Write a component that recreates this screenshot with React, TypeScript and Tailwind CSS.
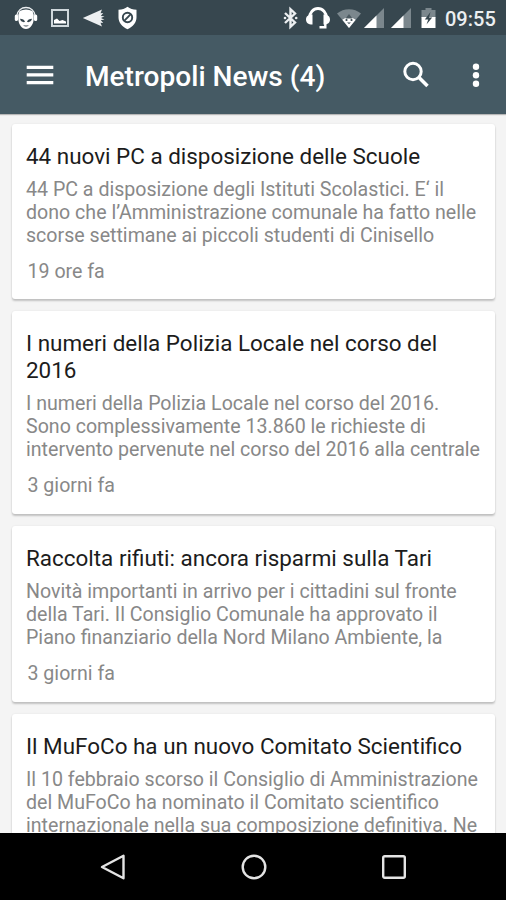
type NewsItem = {
  title: string[];
  body: string[];
  age?: string;
};

const news: NewsItem[] = [
  {
    title: ['44 nuovi PC a disposizione delle Scuole'],
    body: [
      '44 PC a disposizione degli Istituti Scolastici. E‘ il',
      'dono che l’Amministrazione comunale ha fatto nelle',
      'scorse settimane ai piccoli studenti di Cinisello',
    ],
    age: '19 ore fa',
  },
  {
    title: ['I numeri della Polizia Locale nel corso del', '2016'],
    body: [
      'I numeri della Polizia Locale nel corso del 2016.',
      'Sono complessivamente 13.860 le richieste di',
      'intervento pervenute nel corso del 2016 alla centrale',
    ],
    age: '3 giorni fa',
  },
  {
    title: ['Raccolta rifiuti: ancora risparmi sulla Tari'],
    body: [
      'Novità importanti in arrivo per i cittadini sul fronte',
      'della Tari. Il Consiglio Comunale ha approvato il',
      'Piano finanziario della Nord Milano Ambiente, la',
    ],
    age: '3 giorni fa',
  },
  {
    title: ['Il MuFoCo ha un nuovo Comitato Scientifico'],
    body: [
      'Il 10 febbraio scorso il Consiglio di Amministrazione',
      'del MuFoCo ha nominato il Comitato scientifico',
      'internazionale nella sua composizione definitiva. Ne',
    ],
  },
];

export default function App() {
  return (
    <div className="flex h-[900px] w-[506px] flex-col overflow-hidden bg-[#f4f4f4] font-['Roboto',sans-serif]">
      <StatusBar />
      <Toolbar />
      <main className="flex min-h-0 flex-1 flex-col gap-[12px] overflow-hidden pt-[9.5px] pr-[11px] pl-[12px]">
        {news.map((item) => (
          <NewsCard key={item.title[0]} item={item} />
        ))}
      </main>
      <NavigationBar />
    </div>
  );
}

function StatusBar() {
  return (
    <header className="flex h-[35px] shrink-0 items-center justify-between bg-[#37474f] pt-[1px] pr-[10px] pl-[14px] text-white">
      <div className="flex items-center gap-[12px]">
        <CatIcon />
        <PictureIcon />
        <ArrowIcon />
        <ShieldIcon />
      </div>
      <div className="flex items-center">
        <BluetoothIcon />
        <HeadsetIcon />
        <WifiIcon />
        <SignalIcon />
        <SignalIcon />
        <BatteryIcon />
        <span className="w-[51px] pt-[1px] text-[20px] leading-[24px] font-medium whitespace-nowrap text-[#eceff1]">
          09:55
        </span>
      </div>
    </header>
  );
}

function Toolbar() {
  return (
    <div className="z-10 flex h-[79px] shrink-0 items-center bg-[#455a64] pl-[26px] text-white shadow-[0_1px_1px_rgba(0,0,0,0.25)]">
      <svg width="28" height="20" viewBox="0 0 28 20" fill="currentColor">
        <path d="M.7 .7h26.600v3.300H.7zM.7 8.300h26.600v3.300H.7zM.7 15.900h26.600v3.300H.7z" />
      </svg>
      <h1 className="ml-[31px] flex-1 pt-[4px] text-[28.1px] leading-[32px] font-medium whitespace-nowrap">
        Metropoli News (4)
      </h1>
      <svg
        className="mr-[41px]"
        width="28"
        height="28"
        viewBox="0 0 28 28"
        fill="none"
        stroke="currentColor"
        strokeWidth="3"
      >
        <circle cx="11" cy="10.500" r="8.200" />
        <path d="M16.500 16l9 9" strokeWidth="3.600" />
      </svg>
      <svg
        className="mr-[25px]"
        width="10"
        height="26"
        viewBox="0 0 10 26"
        fill="currentColor"
      >
        <circle cx="5" cy="4.800" r="3.200" />
        <circle cx="5" cy="13.300" r="3.200" />
        <circle cx="5" cy="21.800" r="3.200" />
      </svg>
    </div>
  );
}

function NewsCard({ item }: { item: NewsItem }) {
  return (
    <article className="shrink-0 rounded-[3px] bg-white px-[14px] pt-[19px] pb-[15.5px] whitespace-nowrap shadow-[0_2px_2px_rgba(0,0,0,0.2),0_0_2px_rgba(0,0,0,0.08)]">
      <h2 className="text-[22.45px] leading-[26.75px] text-[#1c1c1c]">
        {item.title.map((line) => (
          <span key={line} className="block">
            {line}
          </span>
        ))}
      </h2>
      <p className="mt-[8.5px] text-[19.6px] leading-[23px] text-[#888]">
        {item.body.map((line) => (
          <span key={line} className="block">
            {line}
          </span>
        ))}
      </p>
      {item.age && (
        <div className="mt-[13px] pl-[1.5px] text-[19.6px] leading-[24px] text-[#888]">
          {item.age}
        </div>
      )}
    </article>
  );
}

function NavigationBar() {
  return (
    <nav className="flex h-[67px] shrink-0 items-center justify-center gap-[112.5px] bg-black pl-[1px] text-[#e4e4e4]">
      <svg
        width="28"
        height="28"
        viewBox="0 0 28 28"
        fill="none"
        stroke="currentColor"
        strokeWidth="2.400"
        strokeLinejoin="round"
      >
        <path d="M24.500 2.700v22.600L3 14z" />
      </svg>
      <svg
        width="28"
        height="28"
        viewBox="0 0 28 28"
        fill="none"
        stroke="currentColor"
        strokeWidth="2.400"
      >
        <circle cx="14" cy="14" r="11.300" />
      </svg>
      <svg
        width="28"
        height="28"
        viewBox="0 0 28 28"
        fill="none"
        stroke="currentColor"
        strokeWidth="2.400"
      >
        <rect x="3.200" y="3.200" width="21.600" height="21.600" rx="1.500" />
      </svg>
    </nav>
  );
}

function CatIcon() {
  return (
    <svg width="24" height="24" viewBox="0 0 24 24">
      <path
        d="M2.800 10C3.500 4.500 7.500 1.600 12 1.600S20.500 4.500 21.200 10"
        fill="none"
        stroke="#eceff1"
        strokeWidth="1.500"
      />
      <rect x=".8" y="8.500" width="3.200" height="6.500" rx="1.600" fill="#fff" />
      <rect x="20" y="8.500" width="3.200" height="6.500" rx="1.600" fill="#fff" />
      <path
        d="M5.500 5Q12 2 18.500 5Q20.200 8.500 19.700 13c-.3 5.500-3.400 10-7.700 10s-7.400-4.500-7.700-10Q3.800 8.500 5.500 5z"
        fill="#fff"
      />
      <path
        d="M6 12.800c2.600 0 4.400 1 5 3.200-2.600.6-4.400-.7-5-3.200zM18 12.800c-2.600 0-4.400 1-5 3.200 2.600.6 4.400-.7 5-3.200zM9 19q3 1 6 0-3 3-6 0z"
        fill="#37474f"
      />
    </svg>
  );
}

function PictureIcon() {
  return (
    <svg width="20" height="20" viewBox="0 0 20 20">
      <rect
        x="2"
        y="2"
        width="16"
        height="16"
        fill="none"
        stroke="#cfd8dc"
        strokeWidth="2"
      />
      <path d="M4 15.500v-3.500l3-1.500 2.500 2.500 3-1 3.500 1.500v2z" fill="#fff" />
    </svg>
  );
}

function ArrowIcon() {
  return (
    <svg width="24" height="20" viewBox="0 0 24 20">
      <path
        d="M.8 10L20 1.500l-1.500 3.800 2.700-.3-2.400 3 3.700.2-3.500 1.800 3.500 1.800-3.700.2 2.400 3-2.700-.3 1.500 3.800z"
        fill="#eceff1"
      />
    </svg>
  );
}

function ShieldIcon() {
  return (
    <svg width="20" height="24" viewBox="0 0 20 24">
      <path
        d="M9.500 .8c2.500 2 5.500 2.700 9 3v7.700c0 5-3.500 9.200-9 11.700-5.500-2.500-9-6.700-9-11.700V3.800c3.500-.3 6.500-1 9-3z"
        fill="#fff"
      />
      <g fill="none" stroke="#37474f" strokeWidth="1.900">
        <circle cx="9.500" cy="11.500" r="4.700" />
        <path d="M6.200 14.800l6.600-6.600" />
      </g>
    </svg>
  );
}

function BluetoothIcon() {
  return (
    <svg className="mr-[7px]" width="15" height="24" viewBox="0 0 15 24">
      <path
        d="M2 7l10 9.500-4.500 4.300V3.200L12 7.500 2 17"
        fill="none"
        stroke="#eceff1"
        strokeWidth="2.400"
      />
      <circle cx="2" cy="12" r="1.300" fill="#eceff1" />
      <circle cx="13.200" cy="12" r="1.300" fill="#eceff1" />
    </svg>
  );
}

function HeadsetIcon() {
  return (
    <svg className="mr-[5px]" width="26" height="24" viewBox="0 0 26 24">
      <path
        d="M4.500 12a8.500 9.500 0 0 1 17 0"
        fill="none"
        stroke="#fff"
        strokeWidth="2.800"
      />
      <path
        d="M7.500 8.500v10C3 18.500 1 16.500 1 13.500s2-5 6.500-5zM18.500 8.500v10c4.500 0 6.500-2 6.500-5s-2-5-6.500-5z"
        fill="#fff"
      />
      <path
        d="M20.300 17v4.300h-5.800"
        fill="none"
        stroke="#fff"
        strokeWidth="2.400"
      />
    </svg>
  );
}

function WifiIcon() {
  return (
    <svg className="mr-[2px]" width="26" height="24" viewBox="0 0 26 24">
      <path d="M13 22L1 7.500a19 19 0 0 1 24 0z" fill="#7b878d" />
      <path d="M13 22L6.300 13.800a10.500 10.500 0 0 1 13.400 0z" fill="#fff" />
      <path d="M9.500 12.500L13 8l3.500 4.500z" fill="#4c5a61" />
      <circle cx="10.500" cy="14" r="1.100" fill="#37474f" />
      <circle cx="15.500" cy="14" r="1.100" fill="#37474f" />
      <path d="M11 16.500h4L13 18z" fill="#37474f" />
    </svg>
  );
}

function SignalIcon() {
  return (
    <svg className="mr-[6.5px]" width="20" height="22" viewBox="0 0 20 22">
      <path d="M20 1v20H0z" fill="#7b878d" />
      <path d="M12.500 8.500V21H0z" fill="#fff" />
    </svg>
  );
}

function BatteryIcon() {
  return (
    <svg className="mr-[9px] ml-[4px]" width="15" height="22" viewBox="0 0 15 22">
      <path d="M4.500 1h6v2H14.500v8H.5V3h4z" fill="#7b878d" />
      <path d="M.5 10h14v11H.5z" fill="#fff" />
      <path d="M9.500 5L3.800 12.500h3.400L5.500 17.500l5.700-7H8z" fill="#37474f" />
    </svg>
  );
}
